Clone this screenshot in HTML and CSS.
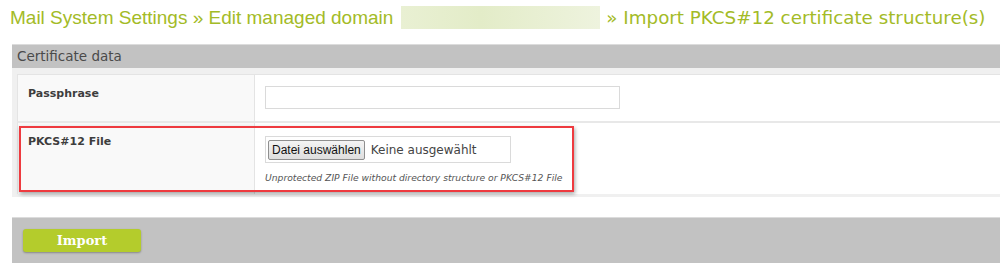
FILE: index.html
```html
<!DOCTYPE html>
<html lang="de">
<head>
  <meta charset="UTF-8" />
  <title>Import PKCS#12 certificate structure(s)</title>
  <link rel="stylesheet" href="styles.css">
</head>
<body>
  <h1 class="crumbs">
    <span class="crumb-main">Mail System Settings » Edit managed domain</span>
    <span class="blurred"></span>
    <span class="crumb-sub">» Import PKCS#12 certificate structure(s)</span>
  </h1>

  <div class="panel">
    <div class="panel-head">Certificate data</div>
    <div class="panel-body">
      <div class="row">
        <div class="label">Passphrase</div>
        <div class="value">
          <input type="password" class="text-input">
        </div>
      </div>
      <div class="row highlight">
        <div class="label">PKCS#12 File</div>
        <div class="value">
          <div class="file-input">
            <span class="file-btn">Datei auswählen</span>
            <span class="file-name">Keine ausgewählt</span>
          </div>
          <div class="hint">Unprotected ZIP File without directory structure or PKCS#12 File</div>
        </div>
        <div class="marker"></div>
      </div>
    </div>
  </div>

  <div class="actions">
    <button class="import-btn">Import</button>
  </div>
</body>
</html>
```

FILE: styles.css
```css
body {
  margin: 0;
  padding: 0;
  background: #fff;
  font-family: "DejaVu Sans", Verdana, sans-serif;
  color: #444;
}

.crumbs {
  margin: 0;
  padding: 6px 0 0 10px;
  height: 38px;
  box-sizing: border-box;
  display: flex;
  align-items: flex-start;
  gap: 8px;
  font-size: 19px;
  font-weight: normal;
  color: #a3bb27;
  white-space: nowrap;
  line-height: 24px;
}

.crumb-main {
  font-family: "Liberation Sans", Arial, sans-serif;
}

.crumb-sub {
  font-family: "DejaVu Sans", Verdana, sans-serif;
  font-size: 18.3px;
  margin-left: -2px;
}

.blurred {
  display: inline-block;
  width: 199px;
  height: 23px;
  background: linear-gradient(to right, #e9f0d3, #e3ecc8 40%, #eef3de);
}

.panel {
  margin-top: 6px;
  margin-left: 12px;
  border-top: 1px solid #dcdcdc;
  background: #f0f0f0;
}

.panel-head {
  background: #c2c2c2;
  height: 23px;
  line-height: 23px;
  padding-left: 5px;
  font-size: 13.5px;
  color: #4a4a4a;
}

.panel-body {
  padding: 6px 0 3px 5px;
}

.row {
  position: relative;
  display: grid;
  grid-template-columns: 237px 1fr;
  border-top: 1px solid #e4e4e4;
  border-left: 1px solid #e4e4e4;
}

.row + .row {
  border-top: 2px solid #e8e8e8;
}

.label {
  background: #f9f9f9;
  border-right: 1px solid #e4e4e4;
  padding: 12px 10px;
  font-size: 11px;
  font-weight: bold;
  color: #3d3d3d;
}

.value {
  background: #fff;
  padding: 11px 10px 12px 10px;
}

.text-input {
  box-sizing: border-box;
  width: 355px;
  height: 23px;
  margin: 0;
  border: 1px solid #dadada;
  background: #fff;
}

.highlight .value {
  padding-top: 13px;
  padding-bottom: 11px;
}

.file-input {
  box-sizing: border-box;
  display: flex;
  align-items: center;
  gap: 6px;
  width: 246px;
  height: 27px;
  padding: 0 2px;
  border: 1px solid #dadada;
}

.file-btn {
  box-sizing: border-box;
  height: 20px;
  line-height: 18px;
  padding: 0 3px;
  border: 1px solid #8f8f8f;
  border-radius: 2px;
  background: linear-gradient(#f4f4f4, #dedede);
  font-family: "Liberation Sans", Arial, sans-serif;
  font-size: 12px;
  color: #111;
}

.file-name {
  font-size: 12px;
  color: #444;
}

.hint {
  margin-top: 9px;
  font-size: 9.2px;
  font-style: italic;
  color: #555;
}

.marker {
  position: absolute;
  left: 1px;
  top: 3px;
  width: 551px;
  height: 62px;
  border: 2px solid #ee3a3f;
  box-shadow: 1px 2px 4px rgba(0, 0, 0, 0.35);
  pointer-events: none;
}

.actions {
  margin: 20px 0 0 12px;
  border-top: 1px solid #dcdcdc;
  background: #c2c2c2;
  height: 46px;
  padding: 11px 0 0 11px;
  box-sizing: border-box;
}

.import-btn {
  width: 118px;
  height: 23px;
  border: none;
  border-radius: 3px;
  background: #b4cc2c;
  box-shadow: 0 1px 2px rgba(0, 0, 0, 0.3);
  font-family: "DejaVu Serif", Georgia, serif;
  font-weight: bold;
  font-size: 13px;
  color: #fff;
  cursor: pointer;
}
```
